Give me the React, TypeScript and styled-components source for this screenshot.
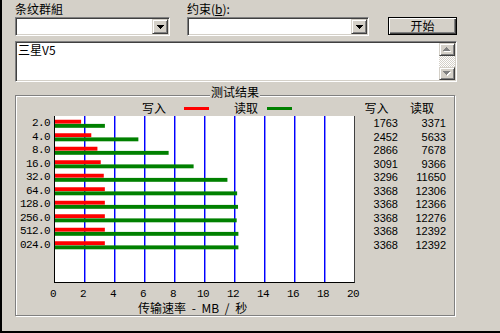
import styled, { createGlobalStyle } from 'styled-components'

const GlobalStyle = createGlobalStyle`
  html, body {
    margin: 0;
    padding: 0;
    background: #d4d0c8;
  }
  body {
    font-family: "Noto Sans CJK SC", "DejaVu Sans", sans-serif;
    font-size: 12px;
    color: #000;
  }
`

const sizes = ['2.0', '4.0', '8.0', '16.0', '32.0', '64.0', '128.0', '256.0', '512.0', '024.0']
const writes = [1763, 2452, 2866, 3091, 3296, 3368, 3368, 3368, 3368, 3368]
const reads = [3371, 5633, 7678, 9366, 11650, 12306, 12366, 12276, 12392, 12392]
const ticks = [0, 2, 4, 6, 8, 10, 12, 14, 16, 18, 20]

const ROW = 13.5
const SCALE = 0.0148

const Window = styled.div`
  box-sizing: border-box;
  width: 500px;
  height: 333px;
  background: #d4d0c8;
  border-left: 2px solid #000;
  border-bottom: 2px solid #000;
  padding: 2px 0 0 13px;
  overflow: hidden;
`

const TopGrid = styled.div`
  display: grid;
  grid-template-columns: 155px 182px 69px;
  column-gap: 17px;
`

const Field = styled.div`
  display: flex;
  flex-direction: column;
`

const Label = styled.div`
  height: 15px;
  line-height: 14px;
  white-space: nowrap;

  u {
    text-decoration: underline;
  }
`

const Sunken = styled.div`
  box-sizing: border-box;
  background: #fff;
  border: 1px solid;
  border-color: #808080 #fff #fff #808080;
  box-shadow: inset 1px 1px 0 #404040, inset -1px -1px 0 #d4d0c8;
  padding: 1px;
`

const Combo = styled(Sunken)`
  height: 19px;
  display: flex;
  justify-content: flex-end;
`

const Raised = styled.div`
  box-sizing: border-box;
  background: #d4d0c8;
  border: 1px solid;
  border-color: #d4d0c8 #404040 #404040 #d4d0c8;
  box-shadow: inset 1px 1px 0 #fff, inset -1px -1px 0 #808080;
  display: flex;
  align-items: center;
  justify-content: center;
`

const ArrowButton = styled(Raised)`
  width: 16px;
  height: 100%;
`

const StartButton = styled.div`
  box-sizing: border-box;
  margin: 15px 0 0 2px;
  width: 69px;
  height: 18px;
  border: 1px solid #000;
  background: #d4d0c8;
  box-shadow: inset 1px 1px 0 #fff, inset -1px -1px 0 #404040, inset -2px -2px 0 #808080;
  display: flex;
  align-items: center;
  justify-content: center;
  line-height: 14px;
  padding-bottom: 1px;
`

const TextBox = styled(Sunken)`
  margin-top: 5px;
  width: 442px;
  height: 41px;
  display: flex;
`

const TextValue = styled.div`
  flex: 1;
  padding: 0 1px;
  line-height: 14px;
`

const ScrollBar = styled.div`
  width: 16px;
  display: flex;
  flex-direction: column;
`

const ScrollButton = styled(Raised)`
  width: 16px;
  height: 13px;
`

const ScrollTrack = styled.div`
  flex: 1;
  background-color: #fff;
  background-image: conic-gradient(#d4d0c8 25%, #fff 0 50%, #d4d0c8 0 75%, #fff 0);
  background-size: 2px 2px;
`

const GroupBox = styled.div`
  position: relative;
  box-sizing: border-box;
  margin-top: 13px;
  width: 440px;
  height: 221px;
  border: 1px solid #808080;
  box-shadow: 1px 1px 0 #fff, inset 1px 1px 0 #fff;
`

const GroupTitle = styled.div`
  position: absolute;
  top: -11px;
  left: 50%;
  transform: translateX(-50%);
  padding: 0 1px;
  background: #d4d0c8;
  line-height: 13px;
  white-space: nowrap;
`

const ChartGrid = styled.div`
  display: grid;
  grid-template-columns: 38px 301px 43px 48px;
  grid-template-rows: 18px 167px 17px 14px;
  padding-top: 2px;
`

const Legend = styled.div`
  grid-column: 2;
  display: flex;
  align-items: center;
  padding: 2px 0 0 88px;
  line-height: 12px;
`

const LegendMark = styled.span<{ color: string; before: number; after: number }>`
  display: inline-block;
  width: 25px;
  height: 3px;
  margin: 0 ${(p) => p.after}px 0 ${(p) => p.before}px;
  background: ${(p) => p.color};
`

const HeadCell = styled.div`
  display: flex;
  align-items: center;
  justify-content: center;
  padding-top: 2px;
  line-height: 12px;
`

const ValueColumn = styled.div`
  display: flex;
  flex-direction: column;
  padding-top: 1.25px;
  text-align: right;
`

const SizeLabel = styled.div`
  height: ${ROW}px;
  line-height: ${ROW}px;
  padding-right: 4px;
  font-family: "Liberation Mono", "DejaVu Sans Mono", monospace;
  font-size: 11px;
  letter-spacing: -0.6px;
  white-space: nowrap;
`

const NumberCell = styled.div`
  height: ${ROW}px;
  line-height: ${ROW}px;
  font-family: "Liberation Sans", Arial, sans-serif;
  font-size: 11px;
`

const Plot = styled.div`
  box-sizing: border-box;
  width: 301px;
  height: 167px;
  background: #fff;
  border-left: 1px solid #000;
  border-right: 1px solid #404040;
  border-bottom: 1px solid #000;

  svg {
    display: block;
  }
`

const AxisTicks = styled.div`
  grid-column: 2;
  display: flex;
  width: 330px;
  margin-left: -16px;
  padding-top: 6px;
`

const Tick = styled.div`
  width: 30px;
  text-align: center;
  line-height: 11px;
  font-family: "Liberation Mono", "DejaVu Sans Mono", monospace;
  font-size: 11px;
  letter-spacing: -0.6px;
`

const AxisTitle = styled.div`
  grid-column: 2;
  padding: 1px 0 0 84px;
  line-height: 13px;
  white-space: pre;
  word-spacing: 3px;
`

const DownArrow = ({ color = '#000' }: { color?: string }) => (
  <svg width="7" height="4" shapeRendering="crispEdges">
    <rect x="0" y="0" width="7" height="1" fill={color} />
    <rect x="1" y="1" width="5" height="1" fill={color} />
    <rect x="2" y="2" width="3" height="1" fill={color} />
    <rect x="3" y="3" width="1" height="1" fill={color} />
  </svg>
)

const DisabledArrow = ({ up }: { up?: boolean }) => {
  const rows = up ? [3, 2, 1, 0] : [0, 1, 2, 3]
  return (
    <svg width="8" height="5" shapeRendering="crispEdges">
      {rows.map((inset, i) => (
        <rect key={'w' + i} x={inset + 1} y={i + 1} width={7 - inset * 2} height="1" fill="#fff" />
      ))}
      {rows.map((inset, i) => (
        <rect key={'g' + i} x={inset} y={i} width={7 - inset * 2} height="1" fill="#808080" />
      ))}
    </svg>
  )
}

const BarChart = () => (
  <svg width="299" height="166">
    {ticks.slice(1, 10).map((t) => (
      <g key={t}>
        <rect x={t * 15 - 1} y="0" width="1" height="166" fill="#0000ff" />
        <rect x={t * 15} y="0" width="1" height="166" fill="#8c8cff" />
      </g>
    ))}
    {writes.map((w, i) => (
      <g key={i}>
        <rect x="0" y={3.75 + i * ROW} width={w * SCALE} height="3.9" fill="#ff0000" />
        <rect x="0" y={7.9 + i * ROW} width={reads[i] * SCALE} height="3.9" fill="#008000" />
      </g>
    ))}
  </svg>
)

const App = () => {
  return (
    <Window>
      <GlobalStyle />
      <TopGrid>
        <Field>
          <Label>条纹群組</Label>
          <Combo>
            <ArrowButton>
              <DownArrow />
            </ArrowButton>
          </Combo>
        </Field>
        <Field>
          <Label>
            约束(<u>b</u>):
          </Label>
          <Combo>
            <ArrowButton>
              <DownArrow />
            </ArrowButton>
          </Combo>
        </Field>
        <StartButton>开始</StartButton>
      </TopGrid>

      <TextBox>
        <TextValue>三星V5</TextValue>
        <ScrollBar>
          <ScrollButton>
            <DisabledArrow up />
          </ScrollButton>
          <ScrollTrack />
          <ScrollButton>
            <DisabledArrow />
          </ScrollButton>
        </ScrollBar>
      </TextBox>

      <GroupBox>
        <GroupTitle>测试结果</GroupTitle>
        <ChartGrid>
          <Legend>
            写入
            <LegendMark color="#ff0000" before={18} after={25} />
            读取
            <LegendMark color="#008000" before={9} after={0} />
          </Legend>
          <HeadCell>写入</HeadCell>
          <HeadCell>读取</HeadCell>

          <ValueColumn>
            {sizes.map((s) => (
              <SizeLabel key={s}>{s}</SizeLabel>
            ))}
          </ValueColumn>
          <Plot>
            <BarChart />
          </Plot>
          <ValueColumn>
            {writes.map((w, i) => (
              <NumberCell key={i}>{w}</NumberCell>
            ))}
          </ValueColumn>
          <ValueColumn>
            {reads.map((r, i) => (
              <NumberCell key={i}>{r}</NumberCell>
            ))}
          </ValueColumn>

          <AxisTicks>
            {ticks.map((t) => (
              <Tick key={t}>{t}</Tick>
            ))}
          </AxisTicks>
          <AxisTitle>传输速率 - MB / 秒</AxisTitle>
        </ChartGrid>
      </GroupBox>
    </Window>
  )
}

export default App
